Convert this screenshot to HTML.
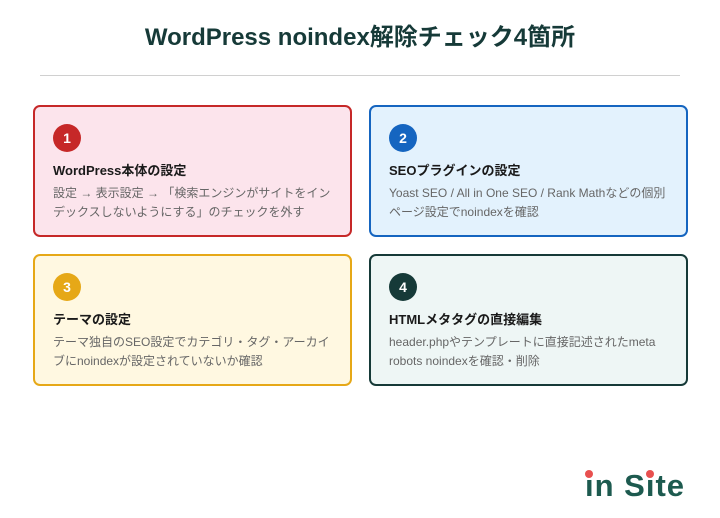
<!DOCTYPE html>
<html><head><meta charset="utf-8"><style>
*{margin:0;padding:0;box-sizing:border-box}
body{width:720px;height:518px;background:#fff;font-family:"Liberation Sans","Noto Sans CJK JP",sans-serif;position:relative;overflow:hidden}
h1{position:absolute;top:22px;left:0;width:720px;text-align:center;font-size:24px;font-weight:bold;color:#163a38;line-height:32px}
.hr{position:absolute;top:75px;left:40px;width:640px;height:1px;background:#d0d0d0}
.card{position:absolute;width:319px;height:132px;border:2px solid;border-radius:7px;padding:0 18px}
.num{position:absolute;left:18px;top:17px;width:28px;height:28px;border-radius:50%;color:#fff;font-weight:bold;font-size:14px;text-align:center;line-height:28px}
.t{position:absolute;left:18px;top:54px;font-size:13px;font-weight:bold;color:#1a1a1a;line-height:20px;white-space:nowrap}
.d{position:absolute;left:18px;top:77px;width:278px;font-size:12px;color:#666;line-height:19px}
.logo{position:absolute;left:585px;top:467px;font-size:31px;font-weight:bold;color:#1d5a4f;font-family:"Liberation Sans",sans-serif;line-height:38px;white-space:nowrap;letter-spacing:1px}
.i{position:relative;display:inline-block}
.i:after{content:"";position:absolute;left:50%;top:3px;width:8px;height:8px;margin-left:-4.5px;border-radius:50%;background:#e8504f}
</style></head><body>
<h1>WordPress noindex解除チェック4箇所</h1>
<div class="hr"></div>
<div class="card" style="left:33px;top:105px;border-color:#c62828;background:#fce4ec"><div class="num" style="background:#c62828">1</div><div class="t">WordPress本体の設定</div><div class="d">設定 → 表示設定 → 「検索エンジンがサイトをインデックスしないようにする」のチェックを外す</div></div>
<div class="card" style="left:369px;top:105px;border-color:#1565c0;background:#e3f2fd"><div class="num" style="background:#1565c0">2</div><div class="t">SEOプラグインの設定</div><div class="d">Yoast SEO / All in One SEO / Rank Mathなどの個別ページ設定でnoindexを確認</div></div>
<div class="card" style="left:33px;top:254px;border-color:#e6a817;background:#fff8e1"><div class="num" style="background:#e6a817">3</div><div class="t">テーマの設定</div><div class="d">テーマ独自のSEO設定でカテゴリ・タグ・アーカイブにnoindexが設定されていないか確認</div></div>
<div class="card" style="left:369px;top:254px;border-color:#163a38;background:#eef6f5"><div class="num" style="background:#163a38">4</div><div class="t">HTMLメタタグの直接編集</div><div class="d">header.phpやテンプレートに直接記述されたmeta robots noindexを確認・削除</div></div>
<div class="logo"><span class="i">ı</span>n S<span class="i">ı</span>te</div>
</body></html>
